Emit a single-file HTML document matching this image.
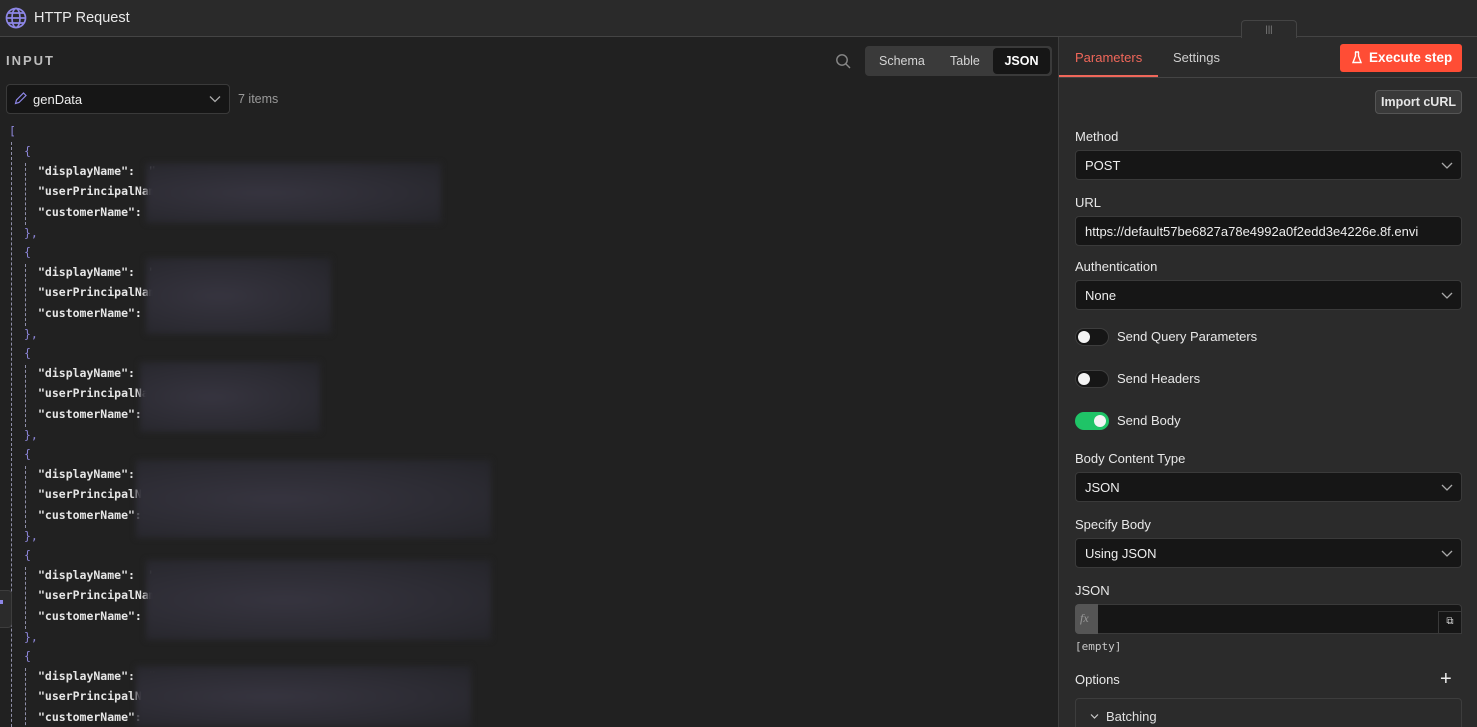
<!DOCTYPE html>
<html style="width:1477px;height:727px;overflow:hidden"><head><style>
*{box-sizing:border-box;margin:0;padding:0}
body{width:1477px;height:727px;overflow:hidden;background:#212121;font-family:"Liberation Sans",sans-serif;color:#e4e4e4;position:relative}
.a{position:absolute}
.mono{font-family:"DejaVu Sans Mono","Liberation Mono",monospace;font-size:11.5px;font-weight:bold;color:#e6e6e6;white-space:pre}
.br{color:#8d86d9;font-weight:normal}
.blur{position:absolute;background:radial-gradient(ellipse at 40% 50%,#36343f 0%,#2d2c34 55%,#25252a 100%);filter:blur(3px)}
.lbl{position:absolute;left:1075px;font-size:13px;color:#e8e8e8}
.sel{position:absolute;left:1075px;width:387px;height:30px;background:#161616;border:1px solid #3a3a3a;border-radius:4px;font-size:13px;color:#eee;padding:7px 9px}
.chev{position:absolute;right:8px;top:8px}
.tog{position:absolute;left:1075px;width:34px;height:18px;border-radius:9px;background:#161616;border:1px solid #3d3d3d}
.tog i{position:absolute;top:2px;left:2px;width:12px;height:12px;border-radius:50%;background:#f4f4f4}
.tl{position:absolute;left:1117px;font-size:13px;color:#e8e8e8}
</style></head><body>
<div class="a" style="left:0;top:0;width:1477px;height:37px;background:#2a2a2a;border-bottom:1px solid #444"></div>
<svg class="a" style="left:5px;top:7px" width="22" height="22" viewBox="0 0 22 22" fill="none" stroke="#8d86e6" stroke-width="1.7"><circle cx="11" cy="11" r="9.5"/><ellipse cx="11" cy="11" rx="4" ry="9.5"/><path d="M1.5 11h19M3 6h16M3 16h16"/></svg>
<div class="a" style="left:34px;top:10px;font-size:14.5px;color:#eaeaea">HTTP Request</div>
<div class="a" style="left:1058px;top:37px;width:419px;height:690px;background:#2b2b2b;border-left:1px solid #3d3d3d;overflow:hidden">
<div class="a" style="left:16px;top:661px;width:387px;height:40px;border:1px solid #3d3d3d;border-radius:4px;background:#2b2b2b"></div>
</div>
<div class="a" style="left:1241px;top:20px;width:56px;height:18px;background:#2b2b2b;border:1px solid #444;border-bottom:none;border-radius:4px 4px 0 0;color:#888;font-size:9px;text-align:center;line-height:16px">|||</div>
<div class="a" style="left:1075px;top:50px;font-size:13px;color:#f0675a">Parameters</div>
<div class="a" style="left:1059px;top:75px;width:99px;height:2px;background:#f0675a"></div>
<div class="a" style="left:1173px;top:50px;font-size:13px;color:#cfcfcf">Settings</div>
<div class="a" style="left:1059px;top:77px;width:418px;height:1px;background:#444"></div>
<div class="a" style="left:1340px;top:44px;width:122px;height:28px;background:#ff4d35;border-radius:3px;color:#fff;font-size:13.5px;font-weight:bold;padding:6px 0 0 29px">Execute step</div>
<svg class="a" style="left:1352px;top:51px" width="10" height="13" viewBox="0 0 10 13" fill="none" stroke="#fff" stroke-width="1.4"><path d="M3 1h4M3.5 1v4L1 11.5h8L6.5 5V1"/></svg>
<div class="a" style="left:1375px;top:90px;width:87px;height:24px;background:#3a3a3a;border:1px solid #555;border-radius:4px;font-size:12.5px;font-weight:bold;color:#e6e6e6;text-align:center;line-height:22px">Import cURL</div>
<div class="lbl" style="top:129px">Method</div>
<div class="sel" style="top:150px">POST<svg class="chev" width="12" height="12" viewBox="0 0 12 12" fill="none" stroke="#aaa" stroke-width="1.3"><path d="M1 4l5 5 5-5"/></svg></div>
<div class="lbl" style="top:195px">URL</div>
<div class="sel" style="top:216px;overflow:hidden;white-space:nowrap">https://default57be6827a78e4992a0f2edd3e4226e.8f.envi</div>
<div class="lbl" style="top:259px">Authentication</div>
<div class="sel" style="top:280px">None<svg class="chev" width="12" height="12" viewBox="0 0 12 12" fill="none" stroke="#aaa" stroke-width="1.3"><path d="M1 4l5 5 5-5"/></svg></div>
<div class="tog" style="top:328px"><i></i></div><div class="tl" style="top:329px">Send Query Parameters</div>
<div class="tog" style="top:370px"><i></i></div><div class="tl" style="top:371px">Send Headers</div>
<div class="tog" style="top:412px;background:#1fc467;border-color:#1fc467"><i style="left:18px"></i></div><div class="tl" style="top:413px">Send Body</div>
<div class="lbl" style="top:451px">Body Content Type</div>
<div class="sel" style="top:472px">JSON<svg class="chev" width="12" height="12" viewBox="0 0 12 12" fill="none" stroke="#aaa" stroke-width="1.3"><path d="M1 4l5 5 5-5"/></svg></div>
<div class="lbl" style="top:517px">Specify Body</div>
<div class="sel" style="top:538px">Using JSON<svg class="chev" width="12" height="12" viewBox="0 0 12 12" fill="none" stroke="#aaa" stroke-width="1.3"><path d="M1 4l5 5 5-5"/></svg></div>
<div class="lbl" style="top:583px">JSON</div>
<div class="a" style="left:1075px;top:604px;width:387px;height:30px;background:#161616;border:1px solid #3a3a3a;border-radius:4px"></div>
<div class="a" style="left:1075px;top:604px;width:23px;height:30px;background:#555;border-radius:4px 0 0 4px;color:#999;font-family:'Liberation Serif',serif;font-style:italic;font-size:12px;padding:7px 0 0 5px">fx</div>
<div class="a" style="left:1438px;top:611px;width:24px;height:23px;background:#161616;border:1px solid #3a3a3a;color:#ddd;font-size:10px;text-align:center;line-height:20px">⧉</div>
<div class="a mono" style="left:1075px;top:640px;font-weight:normal;color:#c8c8c8;font-size:11px">[empty]</div>
<div class="lbl" style="top:672px">Options</div>
<div class="a" style="left:1440px;top:668px;font-size:20px;color:#eee">+</div>
<svg class="a" style="left:1090px;top:713px" width="9" height="7" viewBox="0 0 9 7" fill="none" stroke="#ccc" stroke-width="1.2"><path d="M1 1.5l3.5 3.5 3.5-3.5"/></svg>
<div class="a" style="left:1106px;top:709px;font-size:13px;color:#e0e0e0">Batching</div>
<div class="a" style="left:0;top:38px;width:1057px;height:689px;overflow:hidden">
<div class="a" style="left:6px;top:15px;font-size:13px;letter-spacing:2px;color:#bdbdbd;font-weight:bold">INPUT</div>
<svg class="a" style="left:835px;top:15px" width="16" height="16" viewBox="0 0 16 16" fill="none" stroke="#888" stroke-width="1.4"><circle cx="7" cy="7" r="5.2"/><path d="M11 11l4 4"/></svg>
<div class="a" style="left:865px;top:8px;width:187px;height:30px;background:#3a3a3a;border-radius:4px"></div>
<div class="a" style="left:879px;top:16px;font-size:12.5px;color:#d4d4d4">Schema</div>
<div class="a" style="left:950px;top:16px;font-size:12.5px;color:#d4d4d4">Table</div>
<div class="a" style="left:993px;top:10px;width:57px;height:26px;background:#161616;border-radius:4px;color:#fff;font-size:12.5px;font-weight:bold;text-align:center;line-height:26px">JSON</div>
<div class="a" style="left:6px;top:46px;width:224px;height:30px;background:#161616;border:1px solid #3a3a3a;border-radius:4px;font-size:13px;padding:7px 0 0 26px;color:#eee">genData</div>
<svg class="a" style="left:14px;top:54px" width="13" height="13" viewBox="0 0 13 13" fill="none" stroke="#8d86e6" stroke-width="1.2"><path d="M1.5 11.5l1-3.5 7-7 2.5 2.5-7 7z"/></svg>
<svg class="a" style="left:209px;top:56px" width="12" height="10" viewBox="0 0 12 10" fill="none" stroke="#aaa" stroke-width="1.3"><path d="M1 2.5l5 5 5-5"/></svg>
<div class="a" style="left:238px;top:54px;font-size:12.5px;color:#9a9a9a">7 items</div>
<div class="a mono br" style="left:9px;top:86px">[</div>
<div class="a" style="left:11px;top:104px;height:600px;border-left:1px dashed #8f8fa8"></div>
<div id="items"></div>
<div class="a" style="left:0;top:552px;width:12px;height:38px;background:#2b2b2b;border:1px solid #3d3d3d;border-left:none;border-radius:0 4px 4px 0"></div>
<div class="a" style="left:0;top:562px;width:3px;height:4px;background:#8d86e6"></div>
</div>
<script>
var tops=[151,252,353,454,555,656];
var blurs=[[146,163,295,60],[146,258,185,76],[140,362,180,70],[136,460,355,78],[146,560,345,80],[136,666,335,61]];
var h='',o=38;
tops.forEach(function(t,i){
 t-=o;
 h+='<div class="a mono br" style="left:24px;top:'+(t-7)+'px">{</div>';
 h+='<div class="a" style="left:25px;top:'+(t+12)+'px;height:62px;border-left:1px dashed #8f8fa8"></div>';
 h+='<div class="a mono" style="left:38px;top:'+(t+13)+'px">"displayName":  "</div>';
 h+='<div class="a mono" style="left:38px;top:'+(t+33)+'px">"userPrincipalName": </div>';
 h+='<div class="a mono" style="left:38px;top:'+(t+54)+'px">"customerName": </div>';
 h+='<div class="a mono br" style="left:24px;top:'+(t+75)+'px">},</div>';
 var b=blurs[i];
 h+='<div class="blur" style="left:'+b[0]+'px;top:'+(b[1]-o)+'px;width:'+b[2]+'px;height:'+b[3]+'px"></div>';
});
document.getElementById('items').innerHTML=h;
</script>
</body></html>
